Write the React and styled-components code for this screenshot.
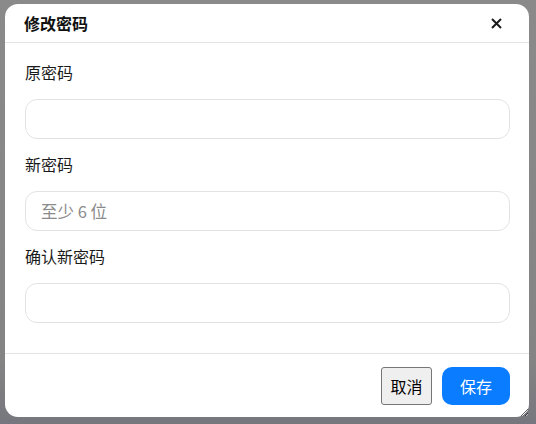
import React from "react";
import styled, { createGlobalStyle } from "styled-components";

const Global = createGlobalStyle`
  html, body { margin: 0; padding: 0; }
  body {
    width: 536px;
    height: 424px;
    overflow: hidden;
    background: #868686;
    font-family: "Noto Sans CJK SC", "Noto Sans", sans-serif;
  }
`;

const Backdrop = styled.div`
  width: 536px;
  height: 424px;
  box-sizing: border-box;
  padding: 4px 7px 7px 5px;
  background: linear-gradient(to bottom, #8a8a8a 0%, #848484 85%, #76767e 100%);
`;

const Dialog = styled.div`
  width: 524px;
  height: 413px;
  box-sizing: border-box;
  background: #fff;
  border-radius: 13px;
  display: flex;
  flex-direction: column;
  overflow: hidden;
  resize: both;
`;

const Header = styled.div`
  height: 38px;
  flex: none;
  display: flex;
  align-items: center;
  justify-content: space-between;
  padding: 0 26px 0 19px;
  border-bottom: 1px solid #e4e4e4;
`;

const Title = styled.h2`
  margin: 0;
  font-size: 16px;
  font-weight: 700;
  color: #111;
  line-height: 22px;
`;

const CloseButton = styled.button`
  border: none;
  background: none;
  padding: 0;
  width: 14px;
  height: 14px;
  display: flex;
  align-items: center;
  justify-content: center;
  cursor: pointer;
`;

const Body = styled.div`
  flex: 1;
  padding: 18px 19px 0 20px;
  display: flex;
  flex-direction: column;
  gap: 14px;
`;

const Field = styled.div`
  display: flex;
  flex-direction: column;
`;

const Label = styled.label`
  font-size: 16px;
  line-height: 22px;
  color: #1a1a1a;
  margin-bottom: 16px;
`;

const Input = styled.input`
  box-sizing: border-box;
  height: 40px;
  width: 100%;
  border: 1px solid #e2e2e2;
  border-radius: 12px;
  padding: 0 15px;
  font-family: inherit;
  font-size: 16.5px;
  color: #222;
  outline: none;
  &::placeholder { color: #8a8a8a; }
`;

const Footer = styled.div`
  flex: none;
  border-top: 1px solid #e4e4e4;
  padding: 13px 19px 12px 0;
  display: flex;
  justify-content: flex-end;
  gap: 10px;
`;

const CancelButton = styled.button`
  height: 38px;
  box-sizing: border-box;
  padding: 0 8.5px;
  background: #efefef;
  border: 1px solid #767676;
  border-radius: 3px;
  font-family: inherit;
  font-size: 16px;
  color: #000;
`;

const SaveButton = styled.button`
  height: 38px;
  box-sizing: border-box;
  padding: 0 18px;
  background: #0a7cff;
  border: none;
  border-radius: 10px;
  font-family: inherit;
  font-size: 16px;
  color: #fff;
`;

const fields = [
  { label: "原密码", placeholder: "" },
  { label: "新密码", placeholder: "至少 6 位" },
  { label: "确认新密码", placeholder: "" },
];

export default function App() {
  return (
    <>
      <Global />
      <Backdrop>
        <Dialog>
          <Header>
            <Title>修改密码</Title>
            <CloseButton aria-label="关闭">
              <svg width="11" height="11" viewBox="0 0 11 11">
                <path d="M1 1 L10 10 M10 1 L1 10" stroke="#1b1b1b" strokeWidth="2" strokeLinecap="butt" />
              </svg>
            </CloseButton>
          </Header>
          <Body>
            {fields.map((f) => (
              <Field key={f.label}>
                <Label>{f.label}</Label>
                <Input type="password" placeholder={f.placeholder} />
              </Field>
            ))}
          </Body>
          <Footer>
            <CancelButton>取消</CancelButton>
            <SaveButton>保存</SaveButton>
          </Footer>
        </Dialog>
      </Backdrop>
    </>
  );
}
